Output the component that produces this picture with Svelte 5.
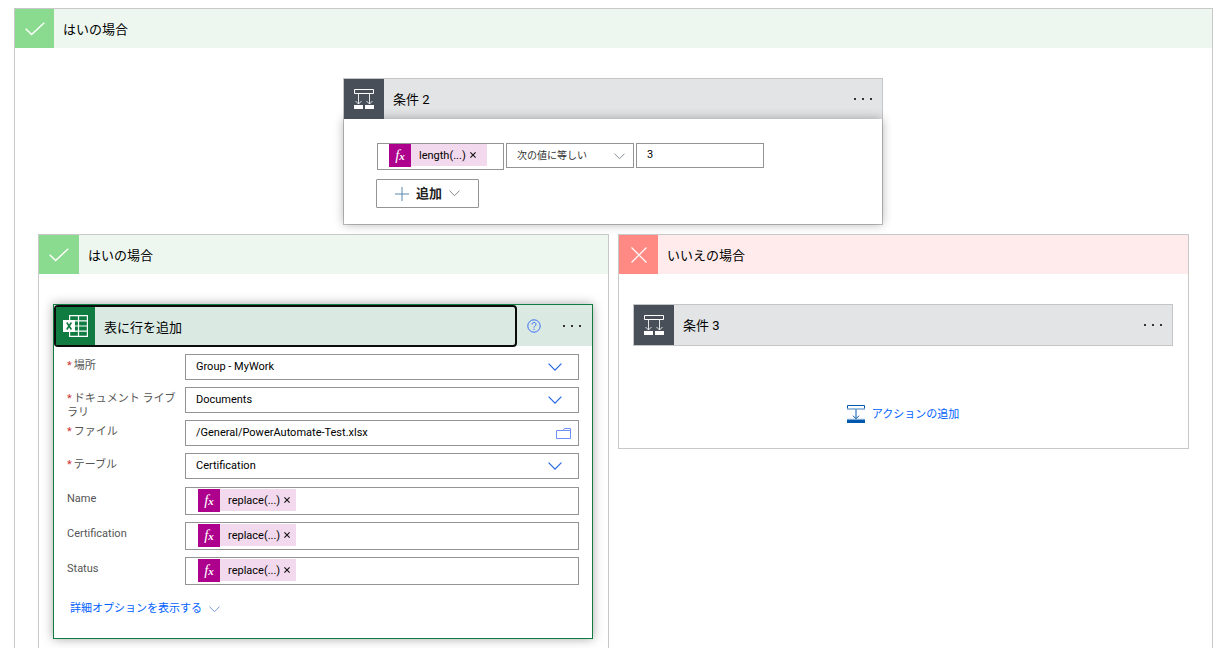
<script>
  const textFields = [
    { id: 'location', label: '場所', value: 'Group - MyWork', kind: 'select' },
    { id: 'library', label: 'ドキュメント ライブラリ', value: 'Documents', kind: 'select' },
    { id: 'file', label: 'ファイル', value: '/General/PowerAutomate-Test.xlsx', kind: 'file' },
    { id: 'table', label: 'テーブル', value: 'Certification', kind: 'select' }
  ];
  const tokenFields = [
    { id: 'name', label: 'Name' },
    { id: 'certification', label: 'Certification' },
    { id: 'status', label: 'Status' }
  ];
</script>

{#snippet check()}
  <svg width="20" height="14" viewBox="0 0 20 14" fill="none" stroke="#fff" stroke-width="1.4" aria-hidden="true">
    <path d="M.7 6.7 6.6 12.6 19.3.7" />
  </svg>
{/snippet}

{#snippet chevron(w)}
  <svg class="chevron" width={w} height={w / 2 + 1} viewBox="0 0 14 8" fill="none" stroke="currentColor" stroke-width="1.2" aria-hidden="true">
    <path d="M.6.7 7 7.1 13.4.7" />
  </svg>
{/snippet}

{#snippet conditionIcon()}
  <span class="icon dark">
    <svg width="20" height="20" viewBox="0 0 20 20" fill="none" stroke="#fff" aria-hidden="true">
      <path d="M.5.5h19v4H.5z" />
      <path d="M4.500 4.500v10.500M15.500 4.500v10.500M1.500 12l3 3 3-3M12.500 12l3 3 3-3" stroke="#e3e5e7" />
      <path d="M0 16h9v4H0zM11 16h9v4h-9z" fill="#fff" stroke="none" />
    </svg>
  </span>
{/snippet}

{#snippet more()}
  <button class="more" aria-label="メニュー">
    <svg width="18" height="2" viewBox="0 0 18 2" fill="#333" aria-hidden="true">
      <path d="M0 0h2v2H0zM8 0h2v2H8zM16 0h2v2h-2z" />
    </svg>
  </button>
{/snippet}

{#snippet token(text)}
  <span class="token">
    <span class="fx">f<small>x</small></span>
    <span class="expr">{text}</span>
    <button class="remove" aria-label="削除">
      <svg width="6" height="6" viewBox="0 0 6 6" stroke="#111" stroke-width="1.1" aria-hidden="true"><path d="M.4.4l5.2 5.2M5.6.4.4 5.6" /></svg>
    </button>
  </span>
{/snippet}

<main class="branch">
  <header class="bar yes narrow"><span class="icon">{@render check()}</span><span>はいの場合</span></header>
  <div class="outer-body">
    <section class="card condition">
      <header class="bar grey">{@render conditionIcon()}<span class="name">条件 2</span>{@render more()}</header>
      <div class="condition-body">
        <div class="rule">
          <div class="box token-box">{@render token('length(...)')}<input aria-label="左辺の値" /></div>
          <div class="picker grey-arrow">
            <select class="box" aria-label="演算子"><option>次の値に等しい</option></select>
            {@render chevron(11)}
          </div>
          <input class="box" aria-label="右辺の値" value="3" />
        </div>
        <button class="add">
          <svg width="14" height="14" viewBox="0 0 14 14" stroke="#5b87ad" aria-hidden="true"><path d="M7 0v14M0 7h14" /></svg>
          <span>追加</span>
          {@render chevron(11)}
        </button>
      </div>
    </section>

    <div class="branches">
      <section class="branch">
        <header class="bar yes"><span class="icon">{@render check()}</span><span>はいの場合</span></header>
        <div class="branch-body">
          <article class="excel">
            <header class="excel-head">
              <button class="title">
                <span class="icon green">
                  <svg width="25" height="22" viewBox="0 0 25 22" fill="none" aria-hidden="true">
                    <path d="M6.600.600h17.800v20.800H6.600zM6.600 5.800h17.800M6.600 11h17.800M6.600 16.200h17.800M15.500.600v20.800" stroke="#fff" stroke-width="1.200" />
                    <path d="M0 5h12v12H0z" fill="#fff" />
                    <path d="M3.800 7.500l4.600 7M8.400 7.500l-4.600 7" stroke="#107c41" stroke-width="1.600" />
                  </svg>
                </span>
                <span>表に行を追加</span>
              </button>
              <button class="help" aria-label="ヘルプ">
                <svg width="14" height="14" viewBox="0 0 14 14" fill="none" stroke="#3b6ff5" aria-hidden="true">
                  <circle cx="7" cy="7" r="6.200" />
                  <path d="M5 5.500C5 4.200 5.800 3.500 7 3.500s2 .7 2 1.800C9 6.700 7 6.800 7 8.600M7 9.700v1.200" />
                </svg>
              </button>
              {@render more()}
            </header>
            <div class="fields">
              {#each textFields as f}
                <div class="field">
                  <label for={f.id}><b>*</b>{f.label}</label>
                  {#if f.kind === 'select'}
                    <div class="picker">
                      <select class="box" id={f.id}><option>{f.value}</option></select>
                      {@render chevron(14)}
                    </div>
                  {:else}
                    <div class="picker file">
                      <input class="box" id={f.id} value={f.value} />
                      <button aria-label="フォルダーを開く">
                        <svg width="15" height="11" viewBox="0 0 15 11" fill="none" stroke="#6f8ff8" aria-hidden="true">
                          <path d="M.5 10.500V2.500H7L8.500.5h6v10zM7 2.500h7.500" />
                        </svg>
                      </button>
                    </div>
                  {/if}
                </div>
              {/each}
            </div>
            <div class="fields tokens">
              {#each tokenFields as f}
                <div class="field">
                  <label for={f.id}>{f.label}</label>
                  <div class="box token-box">{@render token('replace(...)')}<input id={f.id} /></div>
                </div>
              {/each}
            </div>
            <button class="advanced"><span>詳細オプションを表示する</span>{@render chevron(11)}</button>
          </article>
        </div>
      </section>

      <section class="branch">
        <header class="bar no narrow">
          <span class="icon">
            <svg width="16" height="16" viewBox="0 0 16 16" stroke="#fff" stroke-width="1.200" aria-hidden="true"><path d="M.5.5l15 15M15.500.5l-15 15" /></svg>
          </span>
          <span>いいえの場合</span>
        </header>
        <div class="branch-body">
          <section class="card">
            <header class="bar grey">{@render conditionIcon()}<span class="name">条件 3</span>{@render more()}</header>
          </section>
          <button class="add-action">
            <svg width="18" height="18" viewBox="0 0 18 18" fill="none" stroke="#0058ad" aria-hidden="true">
              <path d="M.5 4V.5h17V4" />
              <path d="M0 4h18M0 14.500h18" stroke="#7fabd6" stroke-width="1.500" />
              <path d="M9 4.500v9M6 10.700l3 3 3-3" />
              <path d="M0 15h18v3H0z" fill="#0058ad" stroke="none" />
            </svg>
            <span>アクションの追加</span>
          </button>
        </div>
      </section>
    </div>
  </div>
</main>

<style>
  :global(body) {
    margin: 0;
    background: #fff;
  }
  :global(#app) {
    padding: 8px 7px 0 14px;
  }
  main {
    font-family: Roboto, "Noto Sans CJK JP", sans-serif;
    font-size: 11px;
    color: #000;
  }
  * {
    box-sizing: border-box;
  }
  button,
  input,
  select {
    font: inherit;
    color: inherit;
    margin: 0;
    padding: 0;
    border: 0;
    border-radius: 0;
    background: none;
    outline: 0;
  }
  svg {
    display: block;
    flex: none;
  }
  .branch {
    border: 1px solid #c8c8c8;
    min-width: 0;
  }
  .bar {
    display: flex;
    align-items: center;
    gap: 9px;
    height: 39px;
    font-size: 13px;
  }
  .icon {
    display: flex;
    align-items: center;
    justify-content: center;
    align-self: stretch;
    flex: none;
    width: 40px;
  }
  .narrow .icon {
    width: 39px;
  }
  .yes {
    background: #edf7ef;
  }
  .yes .icon {
    background: #8adb8f;
  }
  .no {
    background: #ffebeb;
  }
  .no .icon {
    background: #ff8a84;
  }
  .grey {
    height: 40px;
    background: #e2e4e6;
  }
  .name {
    padding-bottom: 1px;
  }
  .dark {
    background: #484f58;
  }
  .green {
    background: #107c41;
  }
  .outer-body {
    display: flex;
    flex-direction: column;
    align-items: center;
    gap: 9px;
    padding: 30px 23px 24px;
  }
  .card {
    border: 1px solid #c4c5c6;
  }
  .condition {
    width: min(100%, 540px);
    margin-right: 1px;
  }
  .condition-body {
    padding: 24px 32px 16px;
    background: #fff;
    box-shadow: 0 0 10px rgba(0, 0, 0, 0.32);
  }
  .more {
    display: flex;
    align-items: center;
    justify-content: center;
    align-self: stretch;
    width: 38px;
    margin-left: auto;
  }
  .rule {
    display: grid;
    grid-template-columns: 127px 128px 128px;
    align-items: start;
    gap: 2px;
    margin-left: 1px;
  }
  .box {
    width: 100%;
    height: 26px;
    padding: 0 10px 2px;
    border: 1px solid #949494;
    background: #fff;
    appearance: none;
  }
  .rule .box {
    height: 25px;
  }
  .token-box {
    display: flex;
    align-items: center;
    height: 28px;
    padding: 0 12px 2px;
  }
  .rule .token-box {
    height: 27px;
    padding: 0 11px;
    align-items: flex-start;
  }
  .token-box input {
    flex: 1;
    min-width: 0;
    width: 0;
  }
  .token {
    display: flex;
    align-items: center;
    height: 22px;
    background: #f2d9ed;
  }
  .fx {
    display: flex;
    align-items: baseline;
    justify-content: center;
    width: 22px;
    background: #ad008c;
    color: #fff;
    font: italic 15px/22px "Liberation Serif", serif;
  }
  .fx small {
    font-size: 11px;
    font-weight: bold;
  }
  .expr {
    padding: 0 4px 0 8px;
  }
  .remove {
    padding: 4px 6px 4px 0;
  }
  .rule .remove {
    padding-right: 11px;
  }
  .picker {
    display: grid;
    align-items: center;
    align-self: start;
    color: #2266e3;
  }
  .picker > :global(*) {
    grid-area: 1 / 1;
  }
  .picker .box {
    color: #000;
  }
  .picker > :global(.chevron) {
    justify-self: end;
    margin-right: 17px;
    pointer-events: none;
  }
  .grey-arrow {
    color: #7d8793;
  }
  .grey-arrow > :global(.chevron) {
    margin: 2px 9px 0 0;
  }
  .grey-arrow .box {
    padding-bottom: 0;
    font-size: 10px;
    color: #333;
  }
  .file button {
    justify-self: end;
    margin-right: 8px;
  }
  .add {
    display: flex;
    align-items: center;
    gap: 7px;
    height: 29px;
    margin-top: 9px;
    padding: 0 18px;
    border: 1px solid #949494;
    border-radius: 1px;
    font-size: 13px;
    font-weight: 600;
    color: #222;
  }
  .add span {
    padding-bottom: 2px;
  }
  .add :global(.chevron) {
    color: #7d7d7d;
  }
  .branches {
    display: grid;
    grid-template-columns: 1fr 1fr;
    align-items: start;
    gap: 9px;
    width: 100%;
  }
  .branch-body {
    padding: 30px 15px 24px 14px;
  }
  .excel {
    border: 1px solid #107c41;
    background: #fff;
    box-shadow: 0 0 10px rgba(0, 0, 0, 0.34);
  }
  .excel-head {
    display: flex;
    height: 41px;
    background: #dae9e2;
  }
  .title {
    display: flex;
    flex: 1;
    align-items: center;
    gap: 9px;
    height: 42px;
    border: 2px solid #0b0b0b;
    border-radius: 4px;
    background: #dae9e2;
    font-size: 13px;
  }
  .title .icon {
    width: 39px;
  }
  .help {
    padding: 0 4px 0 10px;
  }
  .excel .more {
    margin-left: 6px;
    width: 41px;
  }
  .fields {
    display: grid;
    gap: 7px;
    padding: 8px 13px 0;
  }
  .field {
    display: grid;
    grid-template-columns: 118px 1fr;
    height: 26px;
  }
  .tokens .field {
    height: 28px;
  }
  label {
    padding: 5px 4px 0 0;
    line-height: 14px;
    color: #555;
  }
  b {
    margin-right: 2px;
    font-weight: 400;
    color: #d13438;
  }
  .advanced {
    display: flex;
    align-items: center;
    gap: 7px;
    margin: 0 16px;
    padding: 16px 0 21px;
    line-height: 16px;
    color: #0062ff;
  }
  .advanced :global(.chevron) {
    color: #6b92d6;
  }
  .add-action {
    display: flex;
    align-items: center;
    gap: 7px;
    margin: 58px auto 0;
    line-height: 20px;
    color: #0062ff;
  }
  .add-action span {
    padding-top: 1px;
    line-height: 19px;
  }
</style>
